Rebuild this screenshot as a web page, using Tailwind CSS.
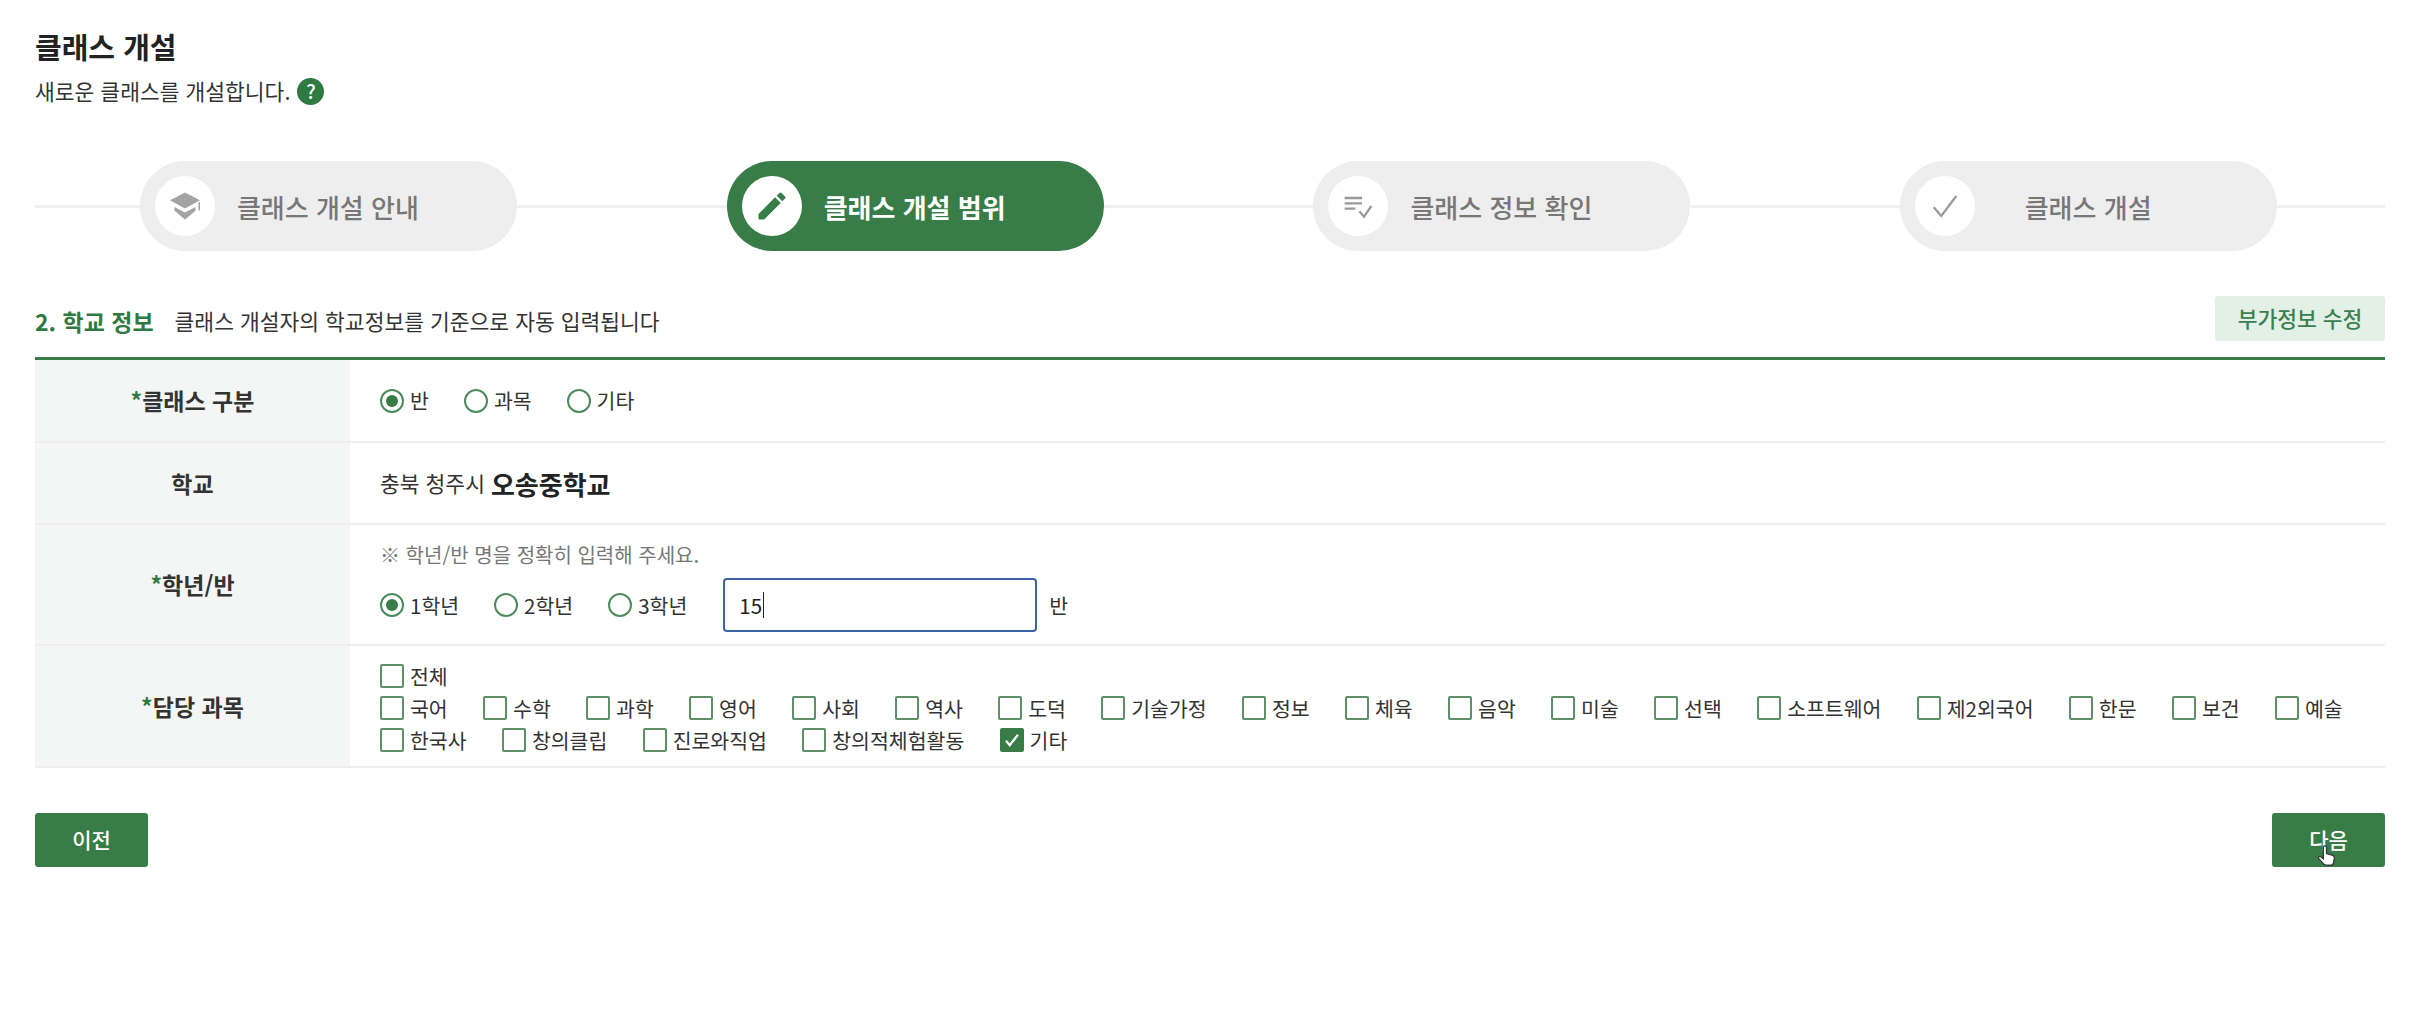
<!DOCTYPE html>
<html lang="ko">

<head>
  <meta charset="UTF-8">
  <meta name="viewport" content="width=device-width, initial-scale=1.0">
  <script src="https://cdn.jsdelivr.net/npm/@tailwindcss/browser@4"></script>
  <title>클래스 개설</title>
</head>

<body class="bg-white font-['Noto_Sans_CJK_KR','Noto_Sans',sans-serif] text-[21px] text-[#333]">
  <div class="relative h-[1032px] pl-[35px] pr-[49px] pt-[26px]">

    <h1 class="text-[29px] leading-[40px] font-bold text-[#222]">클래스 개설</h1>
    <p class="mt-[10px] flex items-center gap-[7px] text-[21.5px] leading-[30px] text-[#333]">
      새로운 클래스를 개설합니다.
      <span class="flex h-[27px] w-[27px] items-center justify-center rounded-full bg-[#2f7a43] text-[20px] font-medium text-white">?</span>
    </p>

    <!-- steps -->
    <div class="relative mr-[3px] mt-[55px] flex h-[90px] justify-around">
      <div class="absolute -right-[3px] left-0 top-[44px] h-[3px] bg-[#f0f0f0]"></div>

      <div class="relative flex w-[377px] items-center rounded-full bg-[#eeeeee] pl-[15px]">
        <span class="flex h-[60px] w-[60px] items-center justify-center rounded-full bg-white">
          <svg class="h-[36px] w-[36px]" viewBox="0 0 24 24" fill="#a3a3a3">
            <path d="M12 3 22 8.2 12 13.6 2 8.2z" />
            <path d="M5 12.6 12 16.4 19 12.6v2.6L12 21 5 15.2z" />
            <path d="M21 9.5h1v5.5h-1z" />
          </svg>
        </span>
        <span class="ml-[22px] w-[182px] text-center text-[26px] font-medium text-[#777]">클래스 개설 안내</span>
      </div>

      <div class="relative flex w-[377px] items-center rounded-full bg-[#387d47] pl-[15px]">
        <span class="flex h-[60px] w-[60px] items-center justify-center rounded-full bg-white">
          <svg class="h-[36px] w-[36px]" viewBox="0 0 24 24" fill="#387d47">
            <path d="M3 17.25V21h3.75L17.81 9.94l-3.75-3.75L3 17.25zM20.71 7.04a1 1 0 0 0 0-1.41l-2.34-2.34a1 1 0 0 0-1.41 0l-1.83 1.83 3.75 3.75 1.83-1.83z" />
          </svg>
        </span>
        <span class="ml-[22px] w-[182px] text-center text-[26px] font-bold text-white">클래스 개설 범위</span>
      </div>

      <div class="relative flex w-[377px] items-center rounded-full bg-[#eeeeee] pl-[15px]">
        <span class="flex h-[60px] w-[60px] items-center justify-center rounded-full bg-white">
          <svg class="h-[32px] w-[32px]" viewBox="0 0 24 24" fill="none" stroke="#999" stroke-width="1.7">
            <path d="M2 6h13M2 10h13M2 14h8M13 16l3.5 4L22 12" />
          </svg>
        </span>
        <span class="ml-[22px] w-[182px] text-center text-[26px] font-medium text-[#777]">클래스 정보 확인</span>
      </div>

      <div class="relative flex w-[377px] items-center rounded-full bg-[#eeeeee] pl-[15px]">
        <span class="flex h-[60px] w-[60px] items-center justify-center rounded-full bg-white">
          <svg class="h-[30px] w-[30px]" viewBox="0 0 24 24" fill="none" stroke="#999" stroke-width="1.8">
            <path d="M3 13l6 7L21 4" />
          </svg>
        </span>
        <span class="ml-[22px] w-[182px] text-center text-[26px] font-medium text-[#777]">클래스 개설</span>
      </div>
    </div>

    <!-- section header -->
    <div class="mt-[45px] flex h-[45px] items-center justify-between">
      <div class="flex items-center pt-[6px]">
        <span class="text-[23px] font-bold text-[#2f7a43]">2. 학교 정보</span>
        <span class="ml-[21px] text-[21.5px] text-[#333]">클래스 개설자의 학교정보를 기준으로 자동 입력됩니다</span>
      </div>
      <button class="h-[45px] w-[170px] rounded-[3px] bg-[#e3f0e6] text-[21.5px] font-medium text-[#3a8050]">부가정보 수정</button>
    </div>

    <!-- form table -->
    <div class="mt-[16px] border-t-[3px] border-[#387d47]">

      <div class="flex h-[83px] border-b-2 border-[#eeeeee]">
        <div class="flex w-[315px] shrink-0 items-center justify-center bg-[#f4f6f5] text-[23px] font-bold text-[#333]"><span class="text-[#2f7a43]">*</span>클래스 구분</div>
        <div class="flex items-center gap-x-[35px] pl-[30px] text-[20.5px]">
          <label class="flex items-center gap-[6px]"><span class="flex h-[24px] w-[24px] items-center justify-center rounded-full border-2 border-[#4d8a5c]"><span class="h-[12px] w-[12px] rounded-full bg-[#387d47]"></span></span>반</label>
          <label class="flex items-center gap-[6px]"><span class="h-[24px] w-[24px] rounded-full border-2 border-[#4d8a5c]"></span>과목</label>
          <label class="flex items-center gap-[6px]"><span class="h-[24px] w-[24px] rounded-full border-2 border-[#4d8a5c]"></span>기타</label>
        </div>
      </div>

      <div class="flex h-[82px] border-b-2 border-[#eeeeee]">
        <div class="flex w-[315px] shrink-0 items-center justify-center bg-[#f4f6f5] text-[23px] font-bold text-[#333]">학교</div>
        <div class="flex items-center gap-[6px] pl-[30px] text-[21.5px]">충북 청주시 <strong class="text-[26px] font-bold text-[#222]">오송중학교</strong></div>
      </div>

      <div class="flex h-[121px] border-b-2 border-[#eeeeee]">
        <div class="flex w-[315px] shrink-0 items-center justify-center bg-[#f4f6f5] text-[23px] font-bold text-[#333]"><span class="text-[#2f7a43]">*</span>학년/반</div>
        <div class="pl-[30px] pt-[17px] text-[20.5px]">
          <p class="h-[26px] text-[20px] leading-[26px] text-[#777]">※ 학년/반 명을 정확히 입력해 주세요.</p>
          <div class="mt-[10px] flex items-center">
            <label class="flex items-center gap-[6px]"><span class="flex h-[24px] w-[24px] items-center justify-center rounded-full border-2 border-[#4d8a5c]"><span class="h-[12px] w-[12px] rounded-full bg-[#387d47]"></span></span>1학년</label>
            <label class="ml-[35px] flex items-center gap-[6px]"><span class="h-[24px] w-[24px] rounded-full border-2 border-[#4d8a5c]"></span>2학년</label>
            <label class="ml-[35px] flex items-center gap-[6px]"><span class="h-[24px] w-[24px] rounded-full border-2 border-[#4d8a5c]"></span>3학년</label>
            <div class="ml-[36px] flex h-[54px] w-[314px] items-center rounded-[4px] border-2 border-[#3b64a0] pl-[14px] text-[#222]">15<span class="ml-[1px] h-[26px] w-[1px] bg-[#222]"></span></div>
            <span class="ml-[12px]">반</span>
          </div>
        </div>
      </div>

      <div class="flex h-[122px] border-b-2 border-[#eeeeee]">
        <div class="flex w-[315px] shrink-0 items-center justify-center bg-[#f4f6f5] text-[23px] font-bold text-[#333]"><span class="text-[#2f7a43]">*</span>담당 과목</div>
        <div class="flex flex-1 flex-wrap content-start gap-x-[35.3px] pl-[30px] pt-[14px] text-[20.5px] leading-[32px]">
          <label class="flex h-[32px] w-full items-center gap-[6px]"><span class="h-[24px] w-[24px] rounded-[2px] border-2 border-[#5d8f69]"></span>전체</label>
          <label class="flex h-[32px] items-center gap-[6px]"><span class="h-[24px] w-[24px] rounded-[2px] border-2 border-[#5d8f69]"></span>국어</label>
          <label class="flex h-[32px] items-center gap-[6px]"><span class="h-[24px] w-[24px] rounded-[2px] border-2 border-[#5d8f69]"></span>수학</label>
          <label class="flex h-[32px] items-center gap-[6px]"><span class="h-[24px] w-[24px] rounded-[2px] border-2 border-[#5d8f69]"></span>과학</label>
          <label class="flex h-[32px] items-center gap-[6px]"><span class="h-[24px] w-[24px] rounded-[2px] border-2 border-[#5d8f69]"></span>영어</label>
          <label class="flex h-[32px] items-center gap-[6px]"><span class="h-[24px] w-[24px] rounded-[2px] border-2 border-[#5d8f69]"></span>사회</label>
          <label class="flex h-[32px] items-center gap-[6px]"><span class="h-[24px] w-[24px] rounded-[2px] border-2 border-[#5d8f69]"></span>역사</label>
          <label class="flex h-[32px] items-center gap-[6px]"><span class="h-[24px] w-[24px] rounded-[2px] border-2 border-[#5d8f69]"></span>도덕</label>
          <label class="flex h-[32px] items-center gap-[6px]"><span class="h-[24px] w-[24px] rounded-[2px] border-2 border-[#5d8f69]"></span>기술가정</label>
          <label class="flex h-[32px] items-center gap-[6px]"><span class="h-[24px] w-[24px] rounded-[2px] border-2 border-[#5d8f69]"></span>정보</label>
          <label class="flex h-[32px] items-center gap-[6px]"><span class="h-[24px] w-[24px] rounded-[2px] border-2 border-[#5d8f69]"></span>체육</label>
          <label class="flex h-[32px] items-center gap-[6px]"><span class="h-[24px] w-[24px] rounded-[2px] border-2 border-[#5d8f69]"></span>음악</label>
          <label class="flex h-[32px] items-center gap-[6px]"><span class="h-[24px] w-[24px] rounded-[2px] border-2 border-[#5d8f69]"></span>미술</label>
          <label class="flex h-[32px] items-center gap-[6px]"><span class="h-[24px] w-[24px] rounded-[2px] border-2 border-[#5d8f69]"></span>선택</label>
          <label class="flex h-[32px] items-center gap-[6px]"><span class="h-[24px] w-[24px] rounded-[2px] border-2 border-[#5d8f69]"></span>소프트웨어</label>
          <label class="flex h-[32px] items-center gap-[6px]"><span class="h-[24px] w-[24px] rounded-[2px] border-2 border-[#5d8f69]"></span>제2외국어</label>
          <label class="flex h-[32px] items-center gap-[6px]"><span class="h-[24px] w-[24px] rounded-[2px] border-2 border-[#5d8f69]"></span>한문</label>
          <label class="flex h-[32px] items-center gap-[6px]"><span class="h-[24px] w-[24px] rounded-[2px] border-2 border-[#5d8f69]"></span>보건</label>
          <label class="flex h-[32px] items-center gap-[6px]"><span class="h-[24px] w-[24px] rounded-[2px] border-2 border-[#5d8f69]"></span>예술</label>
          <label class="flex h-[32px] items-center gap-[6px]"><span class="h-[24px] w-[24px] rounded-[2px] border-2 border-[#5d8f69]"></span>한국사</label>
          <label class="flex h-[32px] items-center gap-[6px]"><span class="h-[24px] w-[24px] rounded-[2px] border-2 border-[#5d8f69]"></span>창의클립</label>
          <label class="flex h-[32px] items-center gap-[6px]"><span class="h-[24px] w-[24px] rounded-[2px] border-2 border-[#5d8f69]"></span>진로와직업</label>
          <label class="flex h-[32px] items-center gap-[6px]"><span class="h-[24px] w-[24px] rounded-[2px] border-2 border-[#5d8f69]"></span>창의적체험활동</label>
          <label class="flex h-[32px] items-center gap-[6px]">
            <span class="flex h-[24px] w-[24px] items-center justify-center rounded-[2px] bg-[#387d47]">
              <svg class="h-[18px] w-[18px]" viewBox="0 0 24 24" fill="none" stroke="#fff" stroke-width="3"><path d="M4 13l5 6L20 5" /></svg>
            </span>기타</label>
        </div>
      </div>
    </div>

    <!-- buttons -->
    <div class="mt-[45px] flex justify-between">
      <button class="h-[54px] w-[113px] rounded-[3px] bg-[#387d47] text-[21px] font-medium text-white">이전</button>
      <button class="h-[54px] w-[113px] rounded-[3px] bg-[#387d47] text-[21px] font-medium text-white">다음</button>
    </div>

    <!-- mouse pointer -->
    <svg class="absolute left-[2317px] top-[845px] h-[22px] w-[19px]" viewBox="0 0 24 28" fill="#fff" stroke="#333" stroke-width="1.6">
      <path d="M8 3a2 2 0 0 1 4 0v8l7 2c2 .6 3 1.6 3 3.5l-1 6c-.3 2-1.2 3-3 3h-7c-1.4 0-2.2-.6-3-1.8L2 17c-1-1.6 1-3.2 2.6-2L8 17.5z" />
    </svg>
  </div>
</body>

</html>
